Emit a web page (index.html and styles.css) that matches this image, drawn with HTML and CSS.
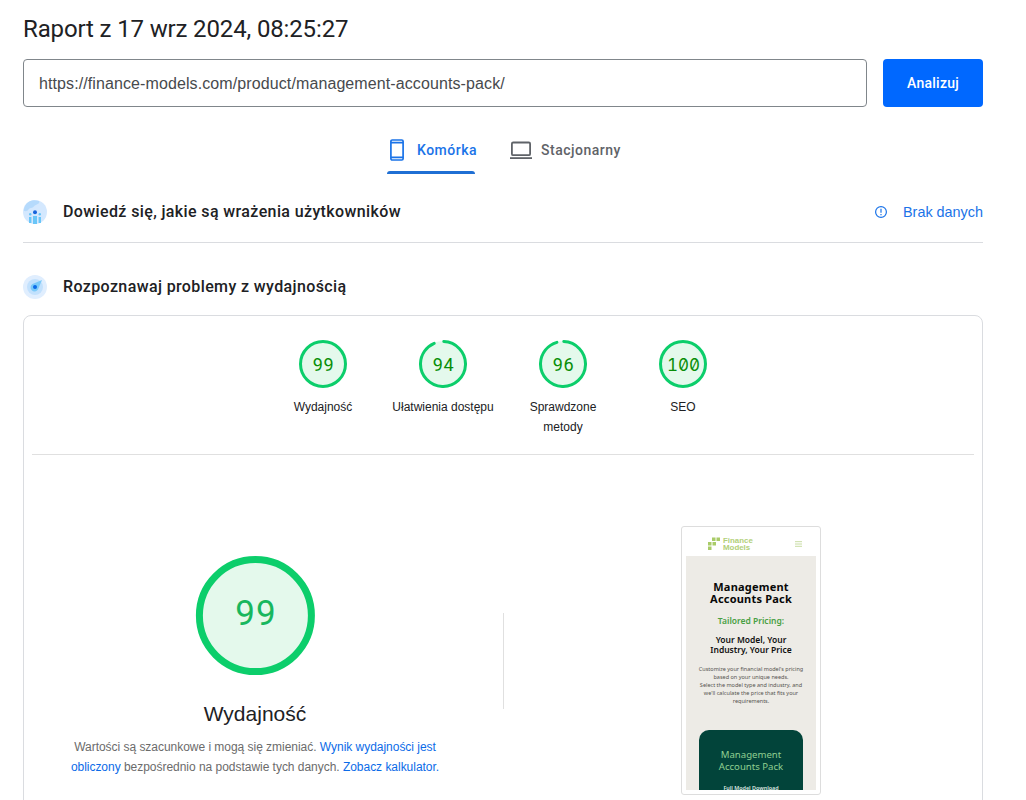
FILE: index.html
```html
<!DOCTYPE html>
<html lang="pl">
<head>
    <meta charset="UTF-8">
    <meta name="viewport" content="width=device-width, initial-scale=1.0">
    <title>PageSpeed Insights</title>
    <link rel="stylesheet" href="styles.css">
</head>
<body>
    <main class="page">
        <h1>Raport z 17 wrz 2024, 08:25:27</h1>
        <form class="url-form">
            <input type="text" class="url-input" value="https://finance-models.com/product/management-accounts-pack/">
            <button type="button" class="analyze">Analizuj</button>
        </form>

        <nav class="tabs">
            <a class="tab active">
                <svg width="16" height="24" viewBox="0 0 16 24" fill="none" stroke="currentColor" stroke-width="1.7">
                    <rect x="1.9" y="2" width="12.2" height="20" rx="1.3"/>
                    <path d="M2 4.6h12M2 19.4h12"/>
                </svg>
                <span>Komórka</span>
            </a>
            <a class="tab">
                <svg width="24" height="24" viewBox="0 0 24 24" fill="none" stroke="currentColor" stroke-width="1.8">
                    <rect x="2.9" y="4.5" width="18.2" height="12.7" rx="1.3"/>
                    <path d="M1 20.1h22"/>
                </svg>
                <span>Stacjonarny</span>
            </a>
        </nav>

        <section class="field">
            <svg width="24" height="24" viewBox="0 0 24 24">
                <circle cx="12" cy="12" r="12" fill="#d4e8fe"/>
                <path d="M1 9C2 4 6 .5 11 .3l5 .7c1 2-1 3-3 4-2 0-2 3-5 3s-2 4-7 3z" fill="#b5dafc"/>
                <path d="M6 17h2.4v6H6zM15.6 17H18v6h-2.4zM10 16h4v8h-4z" fill="#6ac6f8"/>
                <g fill="#6ac6f8">
                    <circle cx="7.2" cy="14.2" r="1.2"/>
                    <circle cx="16.8" cy="14.2" r="1.2"/>
                </g>
                <circle cx="12" cy="12.2" r="2" fill="#1763dc"/>
            </svg>
            <h2>Dowiedź się, jakie są wrażenia użytkowników</h2>
            <span class="no-data">
                <svg width="14" height="14" viewBox="0 0 14 14" fill="none" stroke="currentColor" stroke-width="1.2">
                    <circle cx="7" cy="7" r="5.4"/>
                    <path d="M7 3.8v4M7 9v1.3"/>
                </svg>
                Brak danych
            </span>
        </section>

        <section class="lab">
            <svg width="24" height="24" viewBox="0 0 24 24">
                <circle cx="12" cy="12" r="12" fill="#e0eefe"/>
                <circle cx="12" cy="12" r="8" fill="#c2e1fd"/>
                <path d="M19 5l-4 9.5a4 4 0 1 1-5.5-5.5z" fill="#7bcaf9"/>
                <circle cx="12" cy="12" r="2" fill="#0b6be8"/>
            </svg>
            <h2>Rozpoznawaj problemy z wydajnością</h2>
        </section>

        <div class="report">
            <div class="scores">
                <div class="score">
                    <svg width="48" height="48" viewBox="0 0 48 48">
                        <circle class="disc" cx="24" cy="24" r="23"/>
                        <circle class="arc" cx="24" cy="24" r="22.5"/>
                        <text x="24.5" y="31">99</text>
                    </svg>
                    <span>Wydajność</span>
                </div>
                <div class="score">
                    <svg width="48" height="48" viewBox="0 0 48 48">
                        <circle class="disc" cx="24" cy="24" r="23"/>
                        <circle class="arc" cx="24" cy="24" r="22.5" pathLength="100" stroke-dasharray="93 100" transform="rotate(-88 24 24)"/>
                        <text x="24.5" y="31">94</text>
                    </svg>
                    <span>Ułatwienia dostępu</span>
                </div>
                <div class="score">
                    <svg width="48" height="48" viewBox="0 0 48 48">
                        <circle class="disc" cx="24" cy="24" r="23"/>
                        <circle class="arc" cx="24" cy="24" r="22.5" pathLength="100" stroke-dasharray="95 100" transform="rotate(-88 24 24)"/>
                        <text x="24.5" y="31">96</text>
                    </svg>
                    <span>Sprawdzone metody</span>
                </div>
                <div class="score">
                    <svg width="48" height="48" viewBox="0 0 48 48">
                        <circle class="disc" cx="24" cy="24" r="23"/>
                        <circle class="arc" cx="24" cy="24" r="22.5"/>
                        <text class="full" x="24.5" y="31">100</text>
                    </svg>
                    <span>SEO</span>
                </div>
            </div>

            <div class="category">
                <div class="summary">
                    <svg class="gauge" width="120" height="120" viewBox="0 0 120 120">
                        <circle class="disc" cx="60.4" cy="59.6" r="57"/>
                        <circle class="arc" cx="60.4" cy="59.6" r="56"/>
                        <text x="61" y="69">99</text>
                    </svg>
                    <h3>Wydajność</h3>
                    <p>Wartości są szacunkowe i mogą się zmieniać. <a>Wynik wydajności jest<br>obliczony</a> bezpośrednio na podstawie tych danych. <a>Zobacz kalkulator.</a></p>
                </div>
                <div class="divider"></div>
                <div class="preview">
                    <div class="shot">
                        <div class="shot-header">
                            <svg width="12" height="14" viewBox="0 0 12 14" fill="#a9cb68">
                                <path d="M4 .5h3.5V4H4zM8.5 .5H12V4H8.5zM0 5h3.5v3.5H0zM4.5 5H8v3.5H4.5zM0 9.5h3.5V13H0z"/>
                            </svg>
                            <span class="brand">Finance<br>Models</span>
                            <svg class="menu" width="7" height="6" viewBox="0 0 7 6" stroke="#c8dca3" stroke-width="1">
                                <path d="M0 .7h7M0 3h7M0 5.3h7"/>
                            </svg>
                        </div>
                        <div class="shot-body">
                            <div class="shot-title">Management<br>Accounts Pack</div>
                            <div class="shot-price">Tailored Pricing:</div>
                            <div class="shot-sub">Your Model, Your<br>Industry, Your Price</div>
                            <div class="shot-text">Customize your financial model's pricing<br>based on your unique needs.<br>Select the model type and industry, and<br>we'll calculate the price that fits your<br>requirements.</div>
                            <div class="shot-card">
                                <div class="card-title">Management<br>Accounts Pack</div>
                                <div class="card-text">Full Model Download</div>
                            </div>
                        </div>
                    </div>
                </div>
            </div>
        </div>
    </main>
</body>
</html>
```
FILE: styles.css
```css
* {
    box-sizing: border-box;
}
body {
    margin: 0;
    height: 800px;
    overflow: hidden;
    background: #fff;
    color: #202124;
    font-family: "Liberation Sans", Arial, sans-serif;
}
.page {
    width: 960px;
    margin-left: 23px;
    padding-top: 12px;
}
h1, h2, h3, p {
    margin: 0;
    font-weight: 400;
}
h1 {
    height: 47px;
    font: 400 24px/34px Roboto, sans-serif;
    letter-spacing: -0.14px;
    white-space: nowrap;
}
.url-form {
    display: flex;
    gap: 16px;
}
.url-input {
    flex: 1;
    height: 48px;
    padding: 2px 15px 0;
    border: 1px solid #80868b;
    border-radius: 4px;
    color: #474a4d;
    font: 16px "Liberation Sans", Arial, sans-serif;
    letter-spacing: 0.1px;
}
.analyze {
    width: 100px;
    height: 48px;
    padding: 0;
    border: none;
    border-radius: 4px;
    background: #0068ff;
    color: #fff;
    font: 500 14px Roboto, sans-serif;
    letter-spacing: 0.25px;
}
.tabs {
    display: flex;
    gap: 34px;
    margin: 19px 0 0 364px;
    height: 48px;
}
.tab {
    display: flex;
    align-items: center;
    gap: 8px;
    height: 48px;
    color: #5f6368;
    font: 500 14px Roboto, sans-serif;
    letter-spacing: 0.5px;
}
.tab.active {
    position: relative;
    width: 88px;
    gap: 12px;
    padding-left: 2px;
    color: #1a73e8;
    white-space: nowrap;
}
.tab.active::after {
    content: "";
    position: absolute;
    left: 0;
    bottom: 0;
    width: 88px;
    height: 3px;
    border-radius: 3px 3px 0 0;
    background: #1f6fd4;
}
.tab svg {
    flex: none;
}
.field {
    display: flex;
    align-items: center;
    height: 69px;
    padding-top: 7px;
    border-bottom: 1px solid #dadce0;
}
.lab {
    display: flex;
    align-items: center;
    height: 72px;
    padding-top: 16px;
}
h2 {
    margin-left: 16px;
    font: 500 16px/24px Roboto, sans-serif;
    letter-spacing: 0.38px;
}
.no-data {
    display: flex;
    align-items: center;
    gap: 15px;
    margin-left: auto;
    color: #1a73e8;
    font-size: 14.4px;
}
.report {
    height: 520px;
    padding: 0 8px;
    border: 1px solid #dadce0;
    border-radius: 8px;
}
.scores {
    display: flex;
    justify-content: center;
    height: 139px;
    padding-top: 24px;
    border-bottom: 1px solid #e0e0e0;
}
.score {
    width: 120px;
    padding: 0 8px;
    font-size: 12px;
    line-height: 20px;
    text-align: center;
}
.score svg {
    display: block;
    margin: 0 auto 9px;
}
.score span {
    display: block;
}
.disc {
    fill: #e4f9ec;
}
.arc {
    fill: none;
    stroke: #0cce6b;
    stroke-width: 3;
    stroke-linecap: round;
}
svg text {
    fill: #088e08;
    font: 18px Roboto, sans-serif;
    letter-spacing: 0.7px;
    text-anchor: middle;
}
svg .full {
    font-family: Inter, sans-serif;
    font-feature-settings: "zero", "tnum";
    font-size: 17px;
    letter-spacing: 0;
}
.category {
    display: flex;
    align-items: flex-start;
}
.summary {
    display: flex;
    flex-direction: column;
    align-items: center;
    width: 446px;
    padding-top: 101px;
}
.gauge .arc {
    stroke-width: 7;
}
.gauge text {
    fill: #18b75e;
    font-size: 35px;
    letter-spacing: 1px;
}
h3 {
    margin: 22px 0 7px;
    font-size: 21px;
    line-height: 32px;
}
.summary p {
    color: #6b6b6b;
    font-size: 12px;
    line-height: 20px;
    letter-spacing: -0.03px;
    text-align: center;
    white-space: nowrap;
}
.summary a {
    color: #0b6be8;
}
.divider {
    width: 1px;
    height: 96px;
    margin: 158px 0 0 25px;
    background: #e0e0e0;
}
.preview {
    width: 140px;
    height: 269px;
    margin: 71px 0 0 177px;
    padding: 4px;
    border: 1px solid #ddd;
    border-radius: 3px;
}
.shot {
    width: 130px;
    height: 259px;
    overflow: hidden;
    background: #edebe6;
    font-family: "Noto Sans", sans-serif;
    text-align: center;
    white-space: nowrap;
}
.shot-header {
    display: flex;
    align-items: center;
    height: 25px;
    padding: 0 14px 0 22px;
    background: #fff;
}
.brand {
    margin-left: 3px;
    color: #b2d078;
    font: bold 7.9px/7px "Liberation Sans", Arial, sans-serif;
    text-align: left;
}
.menu {
    margin-left: auto;
}
.shot-title {
    margin-top: 25px;
    color: #080808;
    font-size: 11px;
    font-weight: 700;
    line-height: 12px;
    letter-spacing: 0.2px;
}
.shot-price {
    margin-top: 10px;
    color: #49a043;
    font-size: 8.5px;
    font-weight: 600;
    line-height: 12px;
}
.shot-sub {
    margin-top: 8px;
    color: #111;
    font-size: 8.5px;
    font-weight: 600;
    line-height: 10px;
}
.shot-text {
    margin-top: 10px;
    color: #55534f;
    font-size: 5.5px;
    line-height: 8px;
}
.shot-card {
    width: 104px;
    height: 70px;
    margin: 25px auto 0;
    padding-top: 19px;
    border-radius: 10px 10px 0 0;
    background: #02443a;
    color: #90cf91;
}
.card-title {
    font-size: 9.6px;
    line-height: 12px;
}
.card-text {
    margin-top: 11px;
    color: #dfeae2;
    font-size: 5.4px;
    font-weight: 600;
    line-height: 8px;
}
```
